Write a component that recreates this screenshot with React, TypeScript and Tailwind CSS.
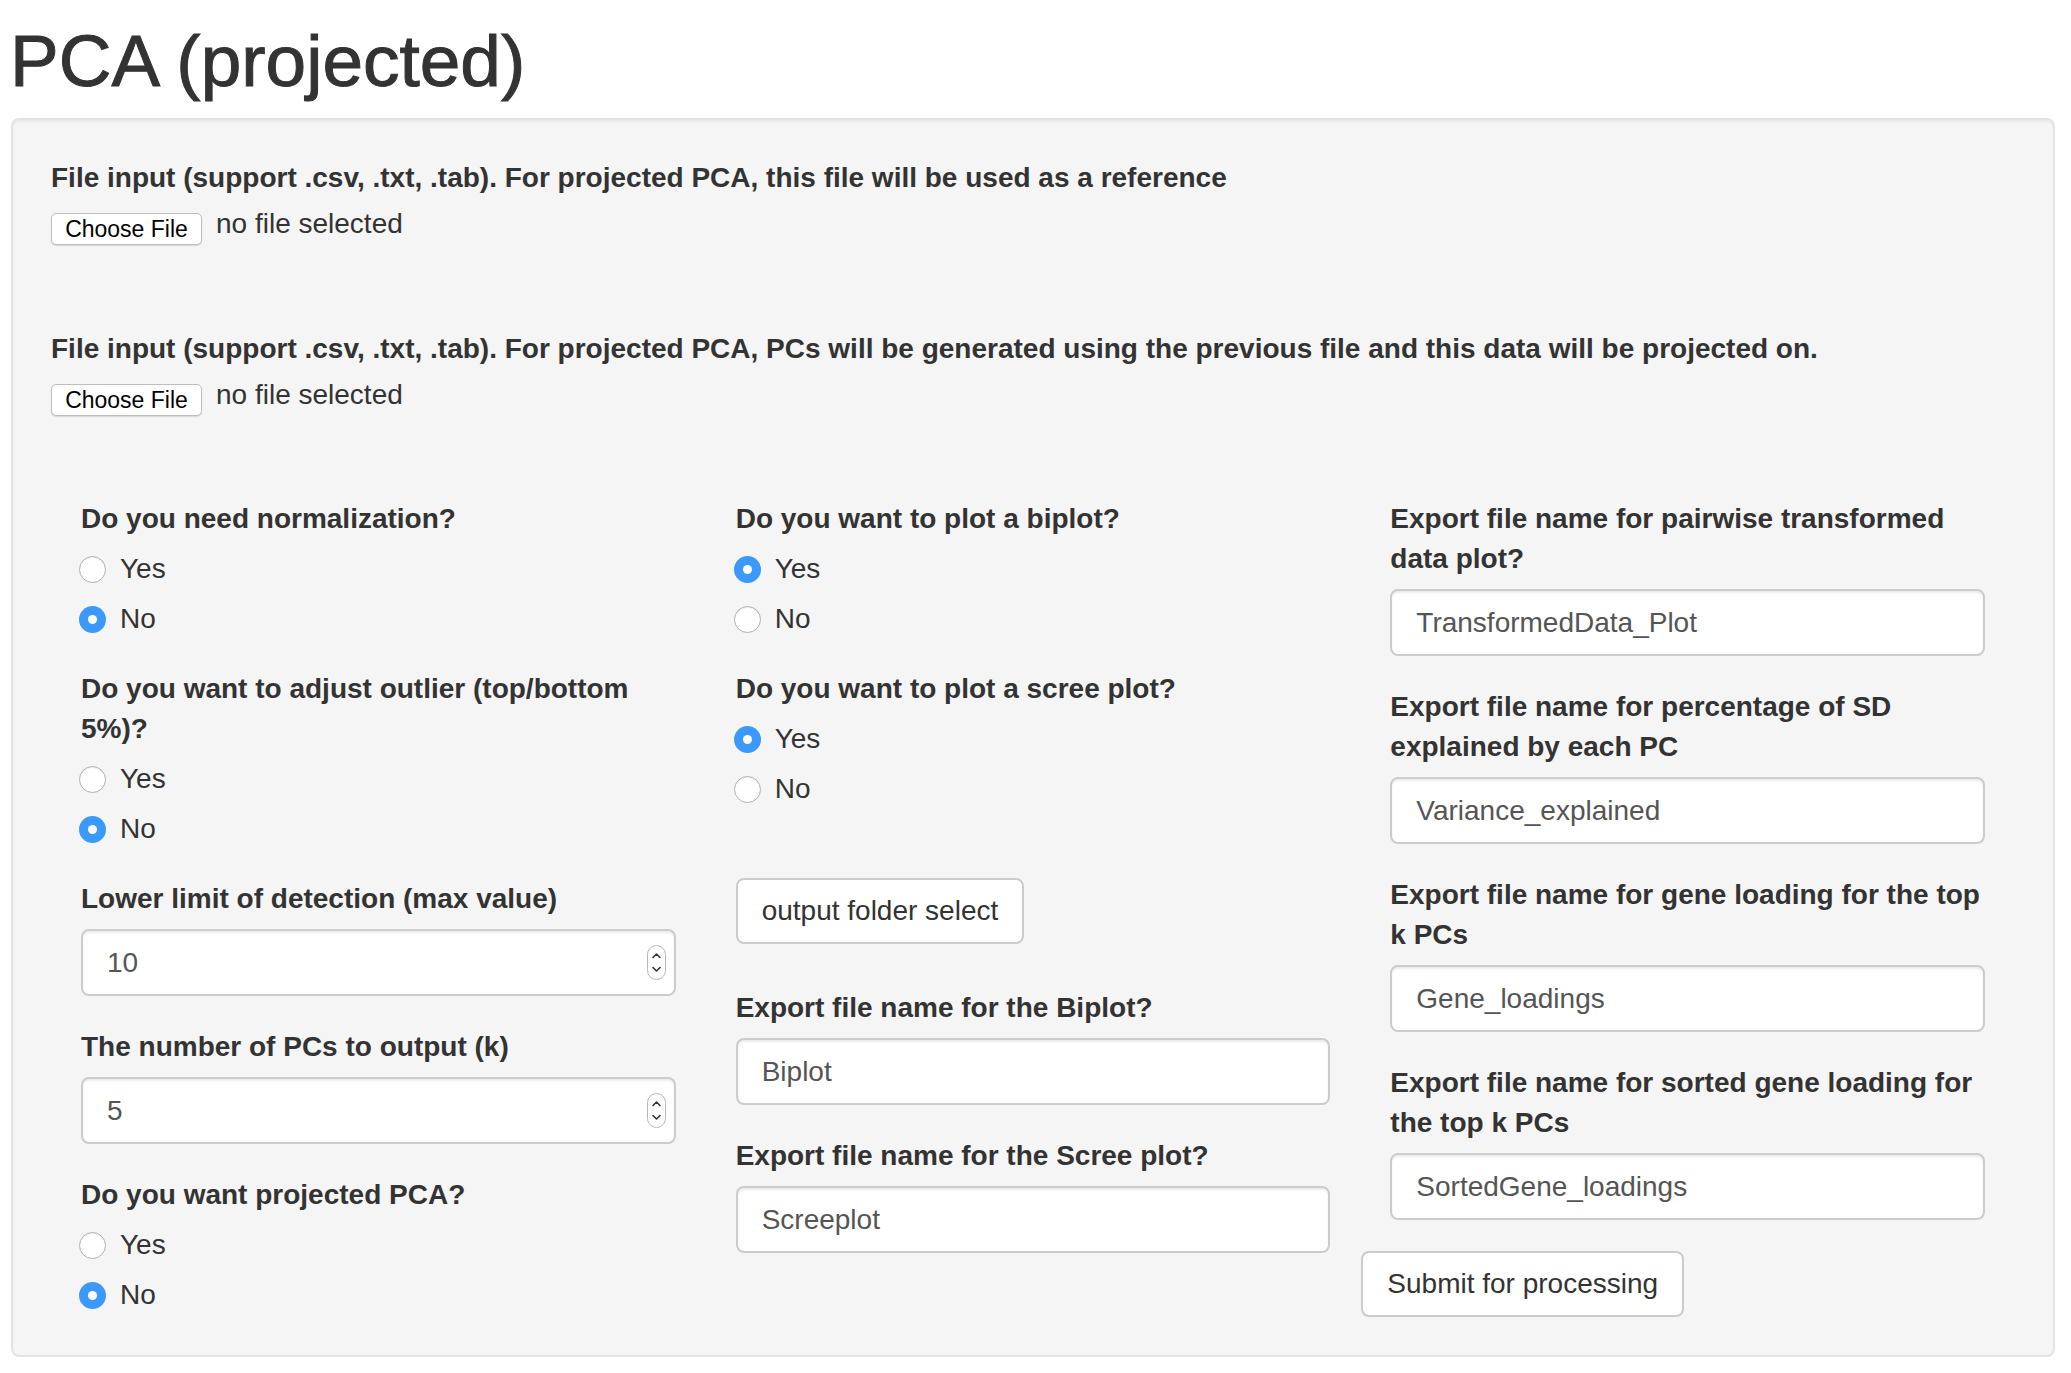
import React from 'react';

const FONT = "font-['Liberation_Sans','Helvetica_Neue',Arial,sans-serif]";

function FileField({ label, last }: { label: string; last?: boolean }) {
  return (
    <div className={last ? 'mb-[80px]' : 'mb-[81px]'}>
      <label className="block font-bold mb-[10px]">{label}</label>
      <div className="flex items-start h-[40px]">
        <button className="mt-[5px] h-[32px] w-[151px] rounded-[5px] border border-[#bdbdbd] bg-white text-[23px] leading-none text-black shadow-[0_1px_1px_rgba(0,0,0,0.12)]">
          Choose File
        </button>
        <span className="ml-[14px] leading-[32px]">no file selected</span>
      </div>
    </div>
  );
}

function Radio({ label, checked }: { label: string; checked?: boolean }) {
  return (
    <div className="flex items-center h-[40px]">
      {checked ? (
        <span className="ml-[-2px] flex h-[27px] w-[27px] items-center justify-center rounded-full bg-[#3b99fc]">
          <span className="h-[9px] w-[9px] rounded-full bg-white" />
        </span>
      ) : (
        <span className="ml-[-2px] h-[27px] w-[27px] rounded-full border border-[#b0b0b0] bg-white shadow-[inset_0_1px_1px_rgba(0,0,0,0.08)]" />
      )}
      <span className="ml-[14px]">{label}</span>
    </div>
  );
}

function RadioGroup({ label, selected, last }: { label: string; selected: string; last?: boolean }) {
  return (
    <div className={last ? '' : 'mb-[30px]'}>
      <label className="block font-bold">{label}</label>
      <div className="mt-[10px] flex flex-col gap-[10px]">
        <Radio label="Yes" checked={selected === 'Yes'} />
        <Radio label="No" checked={selected === 'No'} />
      </div>
    </div>
  );
}

function TextField({ label, value }: { label: string; value: string }) {
  return (
    <div className="mb-[31px]">
      <label className="block font-bold mb-[10px]">{label}</label>
      <input
        readOnly
        value={value}
        className="block h-[67px] w-full rounded-[8px] border-2 border-[#ccc] bg-white px-[24px] text-[#555] shadow-[inset_0_2px_2px_rgba(0,0,0,0.075)] outline-none"
      />
    </div>
  );
}

function NumberField({ label, value }: { label: string; value: string }) {
  return (
    <div className="mb-[31px]">
      <label className="block font-bold mb-[10px]">{label}</label>
      <div className="flex h-[67px] w-full items-center justify-between rounded-[8px] border-2 border-[#ccc] bg-white pl-[24px] pr-[8px] text-[#555] shadow-[inset_0_2px_2px_rgba(0,0,0,0.075)]">
        <span>{value}</span>
        <svg width="19" height="35" viewBox="0 0 19 35">
          <rect x="0.5" y="0.5" width="18" height="34" rx="9" fill="#fff" stroke="#b8b8b8" />
          <path d="M6 12.5 L9.5 9 L13 12.5" fill="none" stroke="#333" strokeWidth="1.6" strokeLinecap="round" strokeLinejoin="round" />
          <path d="M6 22.5 L9.5 26 L13 22.5" fill="none" stroke="#333" strokeWidth="1.6" strokeLinecap="round" strokeLinejoin="round" />
        </svg>
      </div>
    </div>
  );
}

function Btn({ children, className = '' }: { children: React.ReactNode; className?: string }) {
  return (
    <button className={`h-[66px] rounded-[8px] border-2 border-[#ccc] bg-white px-[24px] text-[#333] ${className}`}>
      {children}
    </button>
  );
}

export default function App() {
  return (
    <div className={`${FONT} min-h-screen bg-white pl-[11px] pr-[16px] text-[28px] leading-[40px] text-[#333]`}>
      <h1 className="ml-[-1px] mt-[21px] mb-[18px] text-[73px] leading-[79px] font-medium [-webkit-text-stroke:1px_#333]">PCA (projected)</h1>

      <div className="rounded-[8px] border-2 border-[#e3e3e3] bg-[#f5f5f5] px-[38px] pt-[38px] pb-[38px] shadow-[inset_0_2px_2px_rgba(0,0,0,0.05)]">
        <FileField label="File input (support .csv, .txt, .tab). For projected PCA, this file will be used as a reference" />
        <FileField
          last
          label="File input (support .csv, .txt, .tab). For projected PCA, PCs will be generated using the previous file and this data will be projected on."
        />

        <div className="grid grid-cols-3">
          {/* left column */}
          <div className="px-[30px]">
            <RadioGroup label="Do you need normalization?" selected="No" />
            <RadioGroup label="Do you want to adjust outlier (top/bottom 5%)?" selected="No" />
            <NumberField label="Lower limit of detection (max value)" value="10" />
            <NumberField label="The number of PCs to output (k)" value="5" />
            <RadioGroup label="Do you want projected PCA?" selected="No" last />
          </div>

          {/* middle column */}
          <div className="px-[30px]">
            <RadioGroup label="Do you want to plot a biplot?" selected="Yes" />
            <RadioGroup label="Do you want to plot a scree plot?" selected="Yes" />
            <div className="mt-[69px] mb-[44px]">
              <Btn>output folder select</Btn>
            </div>
            <TextField label="Export file name for the Biplot?" value="Biplot" />
            <TextField label="Export file name for the Scree plot?" value="Screeplot" />
          </div>

          {/* right column */}
          <div className="px-[30px]">
            <TextField label="Export file name for pairwise transformed data plot?" value="TransformedData_Plot" />
            <TextField label="Export file name for percentage of SD explained by each PC" value="Variance_explained" />
            <TextField label="Export file name for gene loading for the top k PCs" value="Gene_loadings" />
            <TextField label="Export file name for sorted gene loading for the top k PCs" value="SortedGene_loadings" />
            <Btn className="ml-[-29px]">Submit for processing</Btn>
          </div>
        </div>
      </div>
    </div>
  );
}
